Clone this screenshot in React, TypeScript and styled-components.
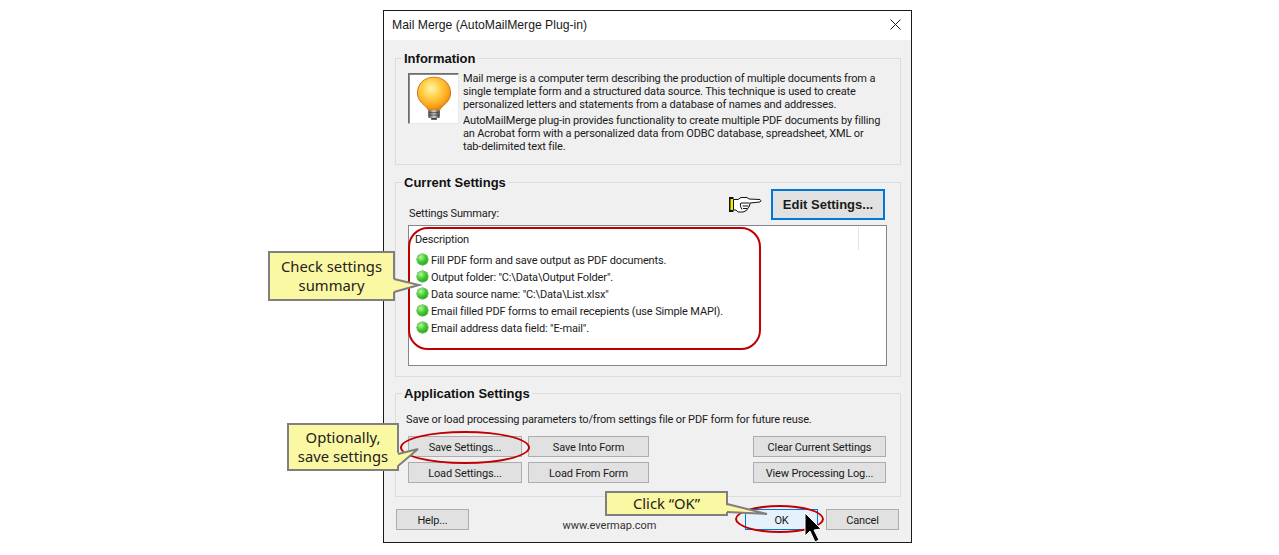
import styled, { createGlobalStyle } from 'styled-components';

const GlobalStyle = createGlobalStyle`
  html, body {
    margin: 0;
    padding: 0;
    background: #ffffff;
  }
  body {
    font-family: Roboto, "Liberation Sans", sans-serif;
    font-size: 11px;
    letter-spacing: -0.15px;
    color: #1a1a1a;
  }
`;

const Page = styled.div`
  position: relative;
  width: 1279px;
  height: 555px;
  overflow: hidden;
  padding: 10px 0 0 383px;
  box-sizing: border-box;
`;

const Dialog = styled.div`
  width: 529px;
  height: 533px;
  box-sizing: border-box;
  border: 1px solid #1a1a1a;
  background: #f0f0f0;
  display: flex;
  flex-direction: column;
`;

const TitleBar = styled.div`
  height: 29px;
  flex: none;
  box-sizing: border-box;
  background: #ffffff;
  display: flex;
  align-items: center;
  justify-content: space-between;
  padding: 0 10px 2px 8px;
  font-family: "Liberation Sans", sans-serif;
  font-size: 12.2px;
  letter-spacing: 0;
`;

const Body = styled.div`
  flex: 1;
  display: flex;
  flex-direction: column;
  padding: 9px 10px 0 11px;
`;

const Group = styled.fieldset<{ $height: number; $gap: number }>`
  margin: 0 0 ${p => p.$gap}px 0;
  padding: 0;
  height: ${p => p.$height}px;
  box-sizing: border-box;
  border: 1px solid #dcdcdc;
  min-inline-size: 0;
`;

const Legend = styled.legend`
  margin-left: 6px;
  padding: 0 2px;
  height: 18px;
  font-family: "Liberation Sans", sans-serif;
  font-size: 13px;
  font-weight: 700;
  line-height: 20px;
  letter-spacing: 0;
  color: #111111;
`;

const InfoRow = styled.div`
  display: flex;
  gap: 4px;
  padding: 6px 0 0 12px;
`;

const BulbFrame = styled.div`
  width: 51px;
  height: 51px;
  flex: none;
  box-sizing: border-box;
  border: 1px solid;
  border-color: #6e6e6e #e8e8e8 #e8e8e8 #6e6e6e;
  box-shadow: inset 1px 1px 0 #8a8a8a;
  background: #ffffff;
  display: flex;
  align-items: center;
  justify-content: center;
`;

const InfoText = styled.div`
  width: 430px;
  margin-top: -1px;
  line-height: 13px;
  color: #1a1a1a;
`;

const InfoPara = styled.p`
  margin: 0 0 3px 0;
`;

const SummaryHead = styled.div`
  height: 36px;
  display: flex;
  align-items: flex-end;
  justify-content: space-between;
  padding: 0 15px 0 13px;
  margin-top: -2px;
`;

const SummaryLabel = styled.div`
  line-height: 14px;
  padding-bottom: 4px;
`;

const EditWrap = styled.div`
  display: flex;
  align-items: center;
  gap: 9px;
  margin-bottom: 5px;
`;

const ListBox = styled.div`
  margin: 0 13px 0 12px;
  height: 141px;
  box-sizing: border-box;
  background: #ffffff;
  border: 1px solid #82878f;
`;

const ListHeader = styled.div`
  height: 25px;
  display: flex;
  justify-content: space-between;
  align-items: center;
  padding-left: 6px;
`;

const HeaderSplit = styled.div`
  width: 28px;
  height: 23px;
  border-left: 1px solid #e5e5e5;
  box-sizing: border-box;
`;

const ListRow = styled.div`
  height: 17px;
  display: flex;
  align-items: center;
  gap: 3px;
  padding-left: 8px;
`;

const ListText = styled.span`
  padding-top: 2px;
`;

const Dot = styled.span`
  width: 11px;
  height: 11px;
  flex: none;
  border-radius: 50%;
  background: radial-gradient(circle at 35% 30%, #b8f5a0 0%, #3fcb2e 45%, #1c8f15 100%);
  box-shadow: 0 0 0 0.5px #2a8a22;
`;

const AppText = styled.div`
  padding: 11px 0 0 10px;
  line-height: 14px;
`;

const ButtonGrid = styled.div`
  display: flex;
  justify-content: space-between;
  padding: 9px 14px 0 12px;
`;

const ButtonCol = styled.div`
  display: flex;
  gap: 6px;
`;

const ButtonStack = styled.div`
  display: flex;
  flex-direction: column;
  gap: 5px;
`;

const Button = styled.div<{ $w: number }>`
  width: ${p => p.$w}px;
  height: 21px;
  box-sizing: border-box;
  padding-top: 2px;
  background: #e1e1e1;
  border: 1px solid #adadad;
  display: flex;
  align-items: center;
  justify-content: center;
  color: #1a1a1a;
`;

const EditButton = styled.div`
  width: 114px;
  height: 31px;
  box-sizing: border-box;
  background: #e1e1e1;
  border: 2px solid #0078d7;
  display: flex;
  align-items: center;
  justify-content: center;
  font-family: "Liberation Sans", sans-serif;
  font-size: 13px;
  font-weight: 700;
  letter-spacing: 0;
  color: #1a1a1a;
`;

const Footer = styled.div`
  display: flex;
  align-items: flex-start;
  padding: 12px 0 0 1px;
`;

const FooterLink = styled.div`
  width: 276px;
  box-sizing: border-box;
  text-align: center;
  padding: 10px 0 0 5px;
  line-height: 14px;
  letter-spacing: 0;
  color: #333333;
`;

const OkButton = styled(Button)`
  background: #e5f1fb;
  border-color: #0078d7;
  margin-right: 8px;
`;

const Callout = styled.div<{ $x: number; $y: number; $w: number; $h: number }>`
  position: absolute;
  left: ${p => p.$x}px;
  top: ${p => p.$y}px;
  width: ${p => p.$w}px;
  height: ${p => p.$h}px;
  box-sizing: border-box;
  background: #fbf8a3;
  border: 2px solid #7f7f7f;
  display: flex;
  align-items: center;
  justify-content: center;
  text-align: center;
  font-family: "Noto Sans", sans-serif;
  font-size: 14.8px;
  line-height: 19px;
  letter-spacing: 0;
  color: #222222;
  z-index: 3;
`;

const CalloutTail = styled.svg`
  position: absolute;
  left: 0;
  top: 0;
  z-index: 4;
  pointer-events: none;
`;

const Ring = styled.div<{ $x: number; $y: number; $w: number; $h: number; $radius: string }>`
  position: absolute;
  left: ${p => p.$x}px;
  top: ${p => p.$y}px;
  width: ${p => p.$w}px;
  height: ${p => p.$h}px;
  box-sizing: border-box;
  border: 2.5px solid #c00000;
  border-radius: ${p => p.$radius};
  z-index: 2;
`;

const CloseIcon = () => (
  <svg width="11" height="11" viewBox="0 0 11 11">
    <path d="M0.5 0.5 L10.5 10.5 M10.5 0.5 L0.5 10.5" stroke="#1a1a1a" strokeWidth="1" fill="none" />
  </svg>
);

const Bulb = () => (
  <svg width="36" height="47" viewBox="0 0 38 47">
    <defs>
      <radialGradient id="glass" cx="42%" cy="35%" r="65%">
        <stop offset="0%" stopColor="#fff3b0" />
        <stop offset="40%" stopColor="#ffd24a" />
        <stop offset="80%" stopColor="#fca51c" />
        <stop offset="100%" stopColor="#e08412" />
      </radialGradient>
      <linearGradient id="base" x1="0" x2="1" y1="0" y2="0">
        <stop offset="0%" stopColor="#4a4a4a" />
        <stop offset="50%" stopColor="#d8d8d8" />
        <stop offset="100%" stopColor="#3a3a3a" />
      </linearGradient>
    </defs>
    <path
      d="M19 1 C8.5 1 1.5 8.5 1.5 17.5 C1.5 24 5.5 28 9 31 C11 32.8 12.5 34 13 36 L25 36 C25.5 34 27 32.8 29 31 C32.5 28 36.5 24 36.5 17.5 C36.5 8.5 29.5 1 19 1 Z"
      fill="url(#glass)"
      stroke="#c8771a"
      strokeWidth="1"
    />
    <rect x="13" y="36" width="12" height="8" rx="1" fill="url(#base)" />
    <path d="M13 38.5 H25 M13 41 H25" stroke="#333333" strokeWidth="0.8" />
    <rect x="16" y="44" width="6" height="2" fill="#444444" />
  </svg>
);

const PointingHand = () => (
  <svg width="33" height="16" viewBox="0 0 33 16">
    <rect x="0" y="0" width="4.5" height="15" fill="#111111" />
    <rect x="1.5" y="2" width="2.5" height="11" fill="#f6ea00" />
    <path
      d="M4.5 2.5 H9 L12 0.5 H18 L20 2 L31 2.5 Q32.8 3.8 31 5 L21 6 L20.5 9 L19 11 L17.5 13.5 L14 15 H9 L7 13 H4.5 Z"
      fill="#ffffff"
      stroke="#111111"
      strokeWidth="1"
    />
    <path d="M12 6 H20.5 M11.5 6 Q10.5 9 13 12.5 M13.5 9 H19.5 M14 11.5 H18" stroke="#111111" strokeWidth="1" fill="none" />
  </svg>
);

const summaryRows = [
  'Fill PDF form and save output as PDF documents.',
  'Output folder: "C:\\Data\\Output Folder".',
  'Data source name: "C:\\Data\\List.xlsx"',
  'Email filled PDF forms to email recepients (use Simple MAPI).',
  'Email address data field: "E-mail".',
];

const App = () => {
  return (
    <Page>
      <GlobalStyle />
      <Dialog>
        <TitleBar>
          <span>Mail Merge (AutoMailMerge Plug-in)</span>
          <CloseIcon />
        </TitleBar>
        <Body>
          <Group $height={116} $gap={8}>
            <Legend>Information</Legend>
            <InfoRow>
              <BulbFrame>
                <Bulb />
              </BulbFrame>
              <InfoText>
                <InfoPara>
                  Mail merge is a computer term describing the production of multiple documents from a<br />
                  single template form and a structured data source. This technique is used to create<br />
                  personalized letters and statements from a database of names and addresses.
                </InfoPara>
                <InfoPara>
                  AutoMailMerge plug-in provides functionality to create multiple PDF documents by filling<br />
                  an Acrobat form with a personalized data from ODBC database, spreadsheet, XML or<br />
                  tab-delimited text file.
                </InfoPara>
              </InfoText>
            </InfoRow>
          </Group>
          <Group $height={204} $gap={7}>
            <Legend>Current Settings</Legend>
            <SummaryHead>
              <SummaryLabel>Settings Summary:</SummaryLabel>
              <EditWrap>
                <PointingHand />
                <EditButton>Edit Settings...</EditButton>
              </EditWrap>
            </SummaryHead>
            <ListBox>
              <ListHeader>
                <ListText>Description</ListText>
                <HeaderSplit />
              </ListHeader>
              {summaryRows.map(row => (
                <ListRow key={row}>
                  <Dot />
                  <ListText>{row}</ListText>
                </ListRow>
              ))}
            </ListBox>
          </Group>
          <Group $height={113} $gap={0}>
            <Legend>Application Settings</Legend>
            <AppText>Save or load processing parameters to/from settings file or PDF form for future reuse.</AppText>
            <ButtonGrid>
              <ButtonCol>
                <ButtonStack>
                  <Button $w={114}>Save Settings...</Button>
                  <Button $w={114}>Load Settings...</Button>
                </ButtonStack>
                <ButtonStack>
                  <Button $w={121}>Save Into Form</Button>
                  <Button $w={121}>Load From Form</Button>
                </ButtonStack>
              </ButtonCol>
              <ButtonStack>
                <Button $w={133}>Clear Current Settings</Button>
                <Button $w={133}>View Processing Log...</Button>
              </ButtonStack>
            </ButtonGrid>
          </Group>
          <Footer>
            <Button $w={73}>Help...</Button>
            <FooterLink>www.evermap.com</FooterLink>
            <OkButton $w={73}>OK</OkButton>
            <Button $w={73}>Cancel</Button>
          </Footer>
        </Body>
      </Dialog>

      <Ring $x={408} $y={227} $w={353} $h={123} $radius="20px" />
      <Ring $x={400} $y={431} $w={130} $h={33} $radius="50%" />
      <Ring $x={735} $y={505} $w={89} $h={28} $radius="50%" />

      <Callout $x={268} $y={251} $w={127} $h={50}>Check settings<br />summary</Callout>
      <Callout $x={287} $y={423} $w={112} $h={48}>Optionally,<br />save settings</Callout>
      <Callout $x={605} $y={491} $w={123} $h={25}>Click “OK”</Callout>

      <CalloutTail width="1279" height="555" viewBox="0 0 1279 555">
        <path d="M393 279 L419 285 L393 292 Z" fill="#fbf8a3" />
        <path d="M394 279 L419 285 L394 292" fill="none" stroke="#7f7f7f" strokeWidth="2" />
        <path d="M397 453 L418 449 L397 466 Z" fill="#fbf8a3" />
        <path d="M398 454 L418 449 L398 466" fill="none" stroke="#7f7f7f" strokeWidth="2" />
        <path d="M726 505 L767 514 L726 512 Z" fill="#fbf8a3" />
        <path d="M727 504 L767 514 L727 512" fill="none" stroke="#7f7f7f" strokeWidth="2" />
        <path
          d="M805 513 L805 536 L810 531 L815 542 L819 540 L814 530 L821 529 Z"
          fill="#000000"
          stroke="#ffffff"
          strokeWidth="1"
        />
      </CalloutTail>
    </Page>
  );
};

export default App;
